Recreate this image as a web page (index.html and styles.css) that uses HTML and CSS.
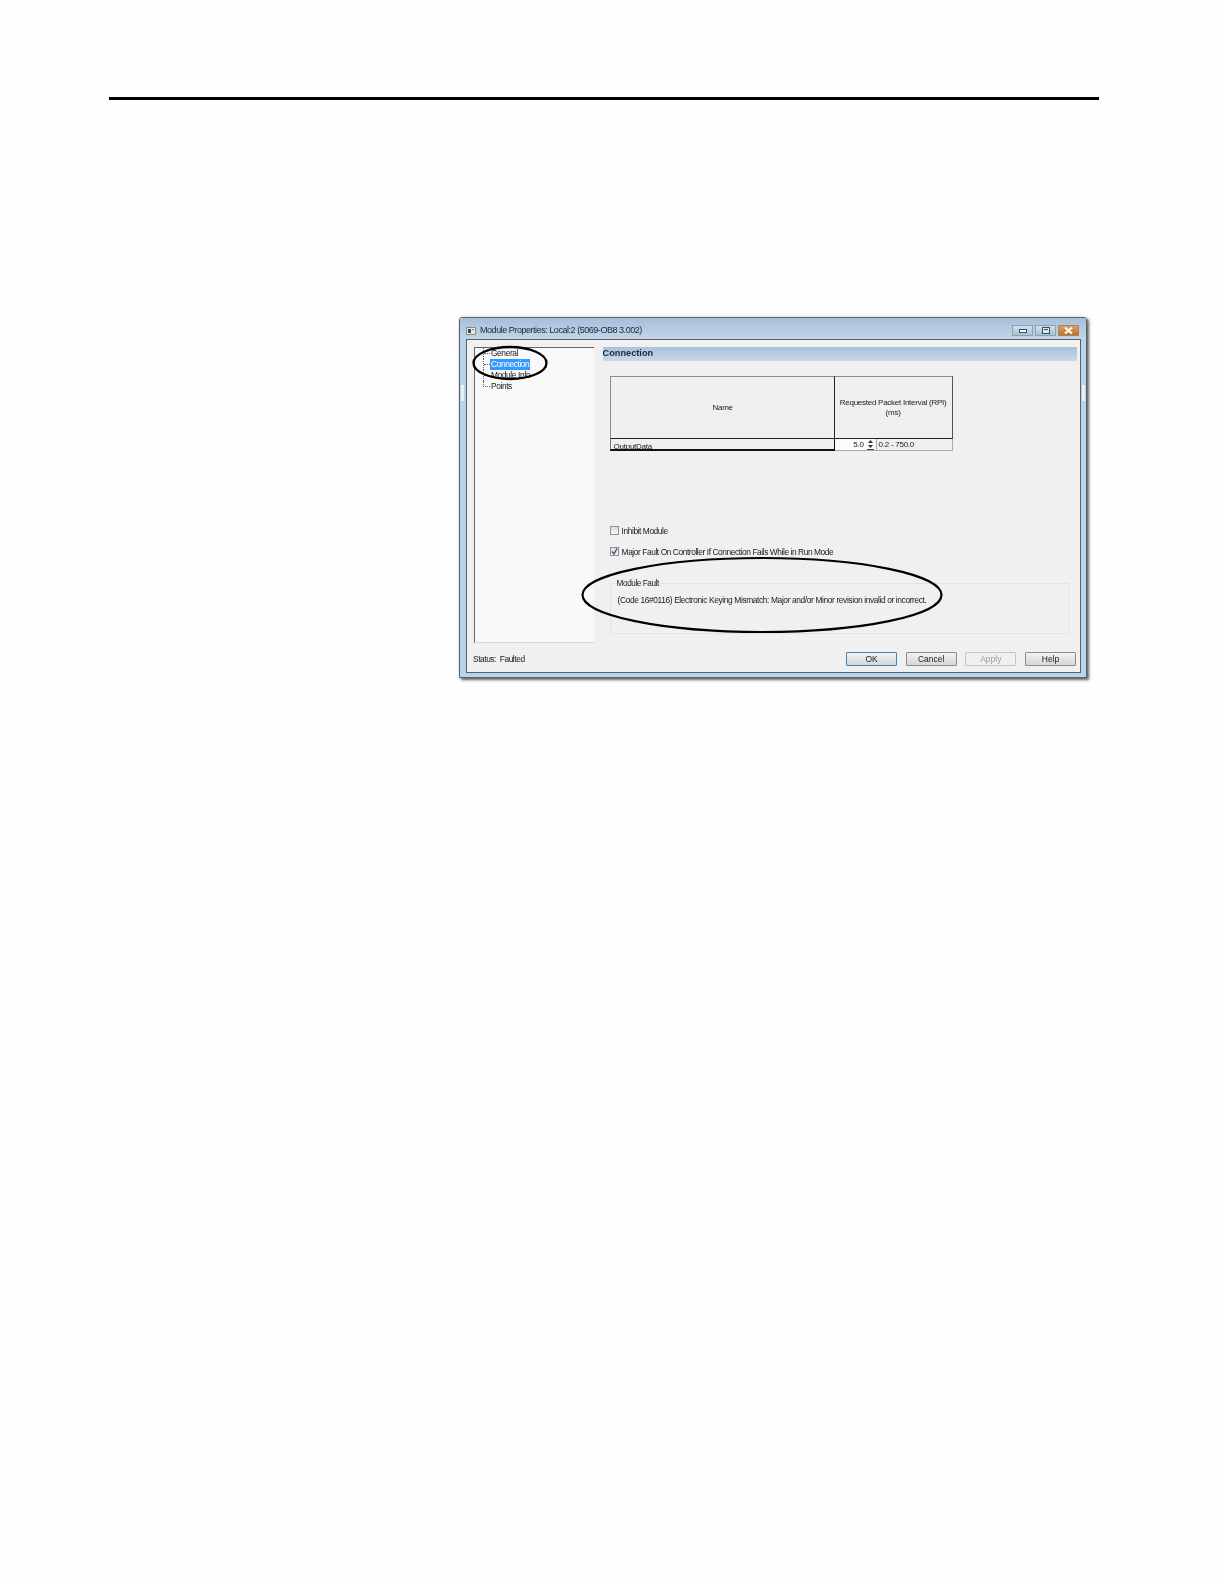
FILE: index.html
```html
<!DOCTYPE html>
<html lang="en">
<head>
    <meta charset="UTF-8">
    <meta name="viewport" content="width=device-width, initial-scale=1.0">
    <title>Module Properties</title>
    <link rel="stylesheet" href="styles.css">
</head>
<body>
    <div class="page">
        <div class="rule"></div>

        <div class="window">
            <div class="titlebar">
                <svg class="app-icon" width="10" height="8" viewBox="0 0 10 8">
                    <rect x="0.5" y="0.5" width="9" height="7" fill="#e8e8e8" stroke="#8a8a8a"/>
                    <rect x="2" y="2" width="3" height="4" fill="#444"/>
                    <rect x="6" y="2" width="2" height="1" fill="#777"/>
                </svg>
                <span class="title">Module Properties: Local:2 (5069-OB8 3.002)</span>
                <div class="controls">
                    <span class="ctl">
                        <svg width="8" height="4" viewBox="0 0 8 4"><rect x="0.5" y="0.5" width="7" height="3" fill="#fff" stroke="#3d4a57"/></svg>
                    </span>
                    <span class="ctl">
                        <svg width="8" height="7" viewBox="0 0 8 7"><rect x="0.5" y="0.5" width="7" height="6" fill="#dfe8f0" stroke="#3d4a57"/><rect x="2" y="2" width="4" height="1" fill="#3d4a57"/></svg>
                    </span>
                    <span class="ctl ctl-close">
                        <svg width="9" height="7" viewBox="0 0 9 7"><path d="M1 0.5 L8 6.5 M8 0.5 L1 6.5" stroke="#fff" stroke-width="2"/></svg>
                    </span>
                </div>
            </div>

            <div class="client">
                <div class="panes">
                    <div class="tree">
                        <ul class="tree-list">
                            <li><span class="tick"></span><span class="node">General</span></li>
                            <li><span class="tick"></span><span class="node selected">Connection</span></li>
                            <li><span class="tick"></span><span class="node">Module Info</span></li>
                            <li><span class="tick"></span><span class="node">Points</span></li>
                        </ul>
                    </div>

                    <div class="main">
                        <div class="section-head">Connection</div>

                        <div class="conn-table">
                            <div class="th th-name">Name</div>
                            <div class="th th-rpi">Requested Packet Interval (RPI)<br>(ms)</div>
                            <div class="td td-name"><span>OutputData</span></div>
                            <div class="td td-rpi">
                                <span class="rpi-value">5.0</span>
                                <svg class="spin" width="9" height="11" viewBox="0 0 9 11">
                                    <path d="M4.5 1 L7 4 H2 Z M4.5 9 L2 6 H7 Z" fill="#333"/>
                                    <rect x="1" y="10" width="7" height="1" fill="#444"/>
                                </svg>
                                <span class="rpi-range">0.2 - 750.0</span>
                            </div>
                        </div>

                        <label class="check check-first"><span class="box"></span>Inhibit Module</label>
                        <label class="check check-second">
                            <span class="box">
                                <svg width="7" height="7" viewBox="0 0 7 7"><path d="M1 3.5 L3 6 L6 0.5" fill="none" stroke="#2d4f7c" stroke-width="1.3"/></svg>
                            </span>Major Fault On Controller If Connection Fails While in Run Mode
                        </label>

                        <fieldset class="fault">
                            <legend>Module Fault</legend>
                            <p class="fault-text">(Code 16#0116) Electronic Keying Mismatch: Major and/or Minor revision invalid or incorrect.</p>
                        </fieldset>
                    </div>
                </div>

                <div class="footer">
                    <span class="status">Status:&nbsp; Faulted</span>
                    <div class="buttons">
                        <button class="btn btn-default">OK</button>
                        <button class="btn">Cancel</button>
                        <button class="btn btn-disabled">Apply</button>
                        <button class="btn">Help</button>
                    </div>
                </div>
            </div>

            <span class="grip grip-left"></span>
            <span class="grip grip-right"></span>

            <!-- hand drawn callouts over the screenshot -->
            <svg class="callouts" width="628" height="361" viewBox="0 0 628 361">
                <ellipse cx="51" cy="46" rx="36.5" ry="16" fill="none" stroke="#000" stroke-width="2.3"/>
                <ellipse cx="303" cy="278" rx="179.5" ry="37" fill="none" stroke="#000" stroke-width="2.2"/>
            </svg>
        </div>
    </div>
</body>
</html>
```

FILE: styles.css
```css
* {
    box-sizing: border-box;
}

body {
    margin: 0;
    padding: 0;
    background-color: #fefefe;
    font-family: "Liberation Sans", Arial, sans-serif;
    color: #1a1a1a;
}

.page {
    padding: 97px 0 0 109px;
    width: 1099px;
    height: 1584px;
}

.rule {
    height: 3px;
    background: #000;
}

/* dialog */
.window {
    position: relative;
    margin: 217px 0 0 350px;
    width: 628px;
    height: 361px;
    padding: 0 5px 4px 6px;
    border: 1px solid #5d6368;
    border-radius: 3px 3px 0 0;
    background: #b9d3ea;
    box-shadow: 2px 2px 3px rgba(0, 0, 0, 0.6), 0 0 3px rgba(0, 0, 0, 0.2);
    filter: blur(0.35px);
}

.titlebar {
    display: flex;
    align-items: center;
    height: 21px;
    margin: 0 -5px 0 -6px;
    padding: 4px 2px 0 6px;
    background: linear-gradient(to bottom, #a6bfd8, #c3d6e8);
}

.app-icon {
    margin-right: 4px;
}

.title {
    margin-bottom: 2px;
    font-size: 9px;
    letter-spacing: -0.46px;
    color: #1c2836;
    white-space: nowrap;
}

.controls {
    display: flex;
    gap: 2px;
    margin: 0 5px 0 auto;
}

.ctl {
    display: flex;
    align-items: center;
    justify-content: center;
    width: 21px;
    height: 11px;
    border: 1px solid #8aa0b3;
    background: linear-gradient(to bottom, #d2e0ec, #a7c0d4);
}

.ctl-close {
    border-color: #b08556;
    background: linear-gradient(to bottom, #dca05e, #bd7430);
}

.client {
    display: flex;
    flex-direction: column;
    height: 334px;
    border: 1px solid #5a5f63;
    background: #f0f0f0;
    padding: 7px 3px 0 7px;
}

.panes {
    display: flex;
    gap: 9px;
}

/* tree */
.tree {
    width: 120px;
    height: 296px;
    background: #f9f9f9;
    border-top: 1px solid #666;
    border-left: 1px solid #666;
    border-bottom: 1px solid #d8d8d8;
    font-size: 8.4px;
    letter-spacing: -0.4px;
}

.tree-list {
    list-style: none;
    margin: 0 0 0 8px;
    padding: 0;
}

.tree-list li {
    display: flex;
    align-items: center;
    height: 11px;
    border-left: 1px dotted #666;
}

.tree-list li:last-child {
    border-left-color: transparent;
}

.tick {
    width: 6px;
    height: 1px;
    border-top: 1px dotted #666;
}

.tree-list li:last-child .tick {
    align-self: flex-start;
    width: 7px;
    height: 6px;
    margin-left: -1px;
    border-top: none;
    border-left: 1px dotted #666;
    border-bottom: 1px dotted #666;
}

.node {
    padding: 0 1px;
    line-height: 11px;
    white-space: nowrap;
}

.selected {
    background: #3399ff;
    color: #fff;
}

/* right side */
.main {
    width: 476px;
    font-size: 8.4px;
}

.section-head {
    height: 14px;
    line-height: 12px;
    font-size: 9.2px;
    font-weight: bold;
    color: #1c2836;
    background: linear-gradient(to bottom, #a9c1da, #c9d9e8);
}

.conn-table {
    display: grid;
    grid-template-columns: 225px 118px;
    grid-template-rows: 63px 12px;
    width: 343px;
    margin: 15px 0 0 7px;
    font-size: 8px;
    letter-spacing: -0.26px;
}

.th {
    display: flex;
    align-items: center;
    justify-content: center;
    text-align: center;
    line-height: 10px;
    border-top: 1px solid #8c8c8c;
}

.th-name {
    border-left: 1px solid #8c8c8c;
    border-right: 1px solid #222;
    border-bottom: 1px solid #222;
    padding-left: 1px;
}

.th-rpi {
    border-right: 1px solid #555;
    border-bottom: 1px solid #222;
}

.td {
    display: flex;
    align-items: center;
    height: 12px;
    overflow: hidden;
}

.td-name {
    padding-left: 3px;
    border-left: 1px solid #777;
    border-right: 1px solid #111;
    border-bottom: 2px solid #111;
}

.td-name span {
    position: relative;
    top: 2px;
}

.td-rpi {
    border-right: 1px solid #aaa;
    border-bottom: 1px solid #aaa;
    background: linear-gradient(to right, #fbfbfb 42px, #f0f0f0 42px);
}

.rpi-value {
    width: 29px;
    text-align: right;
}

.spin {
    margin-left: 2px;
}

.rpi-range {
    margin-left: 1px;
    padding-left: 2px;
    border-left: 1px solid #aaa;
    height: 11px;
    line-height: 11px;
}

.check {
    display: flex;
    align-items: center;
    height: 9px;
    margin-left: 7px;
    font-size: 8.4px;
    letter-spacing: -0.43px;
    white-space: nowrap;
}

.check-first {
    margin-top: 75px;
}

.check-second {
    margin-top: 12px;
}

.box {
    display: flex;
    align-items: center;
    justify-content: center;
    width: 9px;
    height: 9px;
    margin-right: 3px;
    border: 1px solid #8e8f8f;
    background: linear-gradient(to bottom, #dedede, #f6f6f6);
}

.fault {
    width: 459px;
    height: 56px;
    margin: 22px 0 0 7px;
    padding: 0 0 0 6px;
    border: 1px solid #e4e4e4;
    font-size: 8.4px;
    letter-spacing: -0.38px;
}

.fault legend {
    padding: 0;
    margin-left: 0;
    font-size: 8.2px;
    letter-spacing: -0.42px;
    line-height: 11px;
}

.fault-text {
    margin: 6px 0 0 1px;
    white-space: nowrap;
}

/* footer */
.footer {
    display: flex;
    align-items: center;
    height: 30px;
    font-size: 8.4px;
}

.status {
    margin-left: -1px;
    padding-top: 2px;
    letter-spacing: -0.44px;
}

.buttons {
    display: flex;
    gap: 8.67px;
    margin: 2px 1px 0 auto;
}

.btn {
    width: 51px;
    height: 14px;
    padding: 0;
    border: 1px solid #8a8a8a;
    border-radius: 1px;
    background: linear-gradient(to bottom, #f2f2f2, #d6d6d6);
    font-family: inherit;
    font-size: 8.5px;
    color: #1a1a1a;
}

.btn-default {
    border-color: #3d87b8;
}

.btn-disabled {
    border-color: #c6c6c6;
    background: #f0f0f0;
    color: #999;
}

/* resize grips in the window frame */
.grip {
    position: absolute;
    top: 67px;
    width: 3px;
    height: 16px;
    background: #e6f0f8;
}

.grip-left {
    left: 1px;
}

.grip-right {
    right: 1px;
}

.callouts {
    position: absolute;
    top: -1px;
    left: -1px;
    pointer-events: none;
}
```
